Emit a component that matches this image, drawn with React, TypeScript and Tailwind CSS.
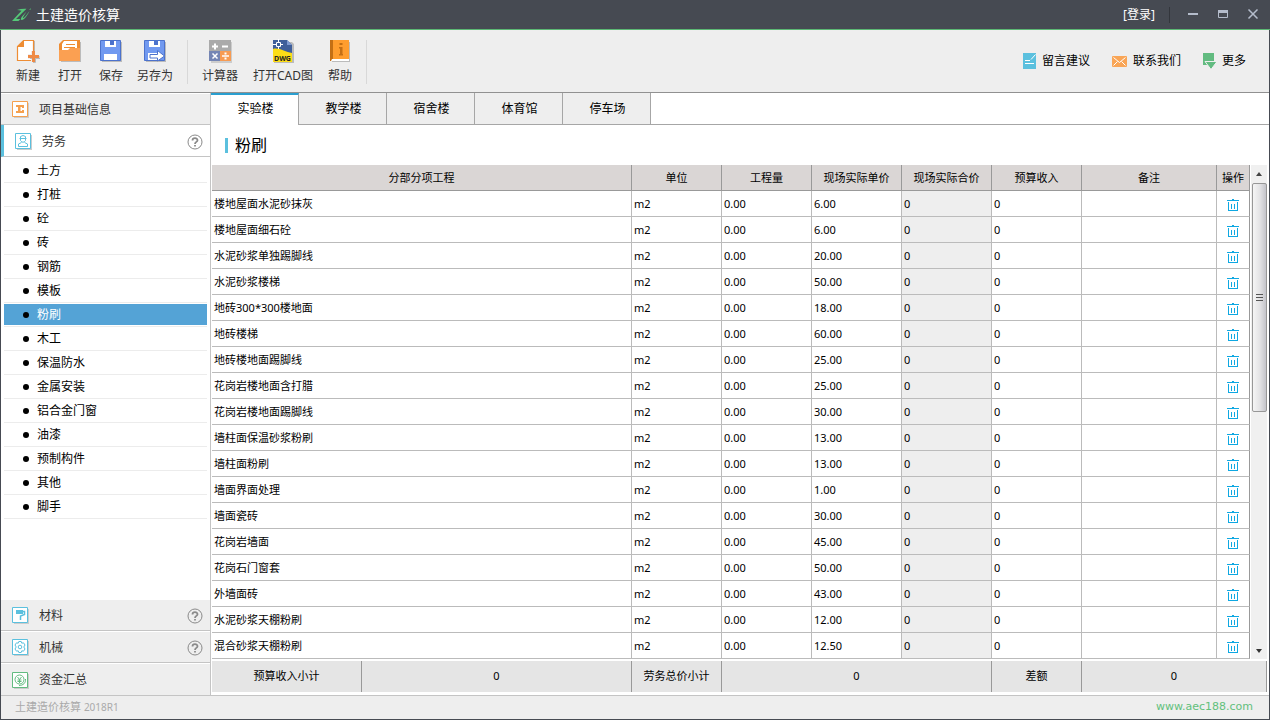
import type { ReactNode } from "react";

type Row = { name: string; price: string };

const rows: Row[] = [
  { name: "楼地屋面水泥砂抹灰", price: "6.00" },
  { name: "楼地屋面细石砼", price: "6.00" },
  { name: "水泥砂浆单独踢脚线", price: "20.00" },
  { name: "水泥砂浆楼梯", price: "50.00" },
  { name: "地砖300*300楼地面", price: "18.00" },
  { name: "地砖楼梯", price: "60.00" },
  { name: "地砖楼地面踢脚线", price: "25.00" },
  { name: "花岗岩楼地面含打腊", price: "25.00" },
  { name: "花岗岩楼地面踢脚线", price: "30.00" },
  { name: "墙柱面保温砂浆粉刷", price: "13.00" },
  { name: "墙柱面粉刷", price: "13.00" },
  { name: "墙面界面处理", price: "1.00" },
  { name: "墙面瓷砖", price: "30.00" },
  { name: "花岗岩墙面", price: "45.00" },
  { name: "花岗石门窗套", price: "50.00" },
  { name: "外墙面砖", price: "43.00" },
  { name: "水泥砂浆天棚粉刷", price: "12.00" },
  { name: "混合砂浆天棚粉刷", price: "12.50" },
];

const trades = [
  "土方", "打桩", "砼", "砖", "钢筋", "模板", "粉刷", "木工",
  "保温防水", "金属安装", "铝合金门窗", "油漆", "预制构件", "其他", "脚手",
];

const buildings = ["实验楼", "教学楼", "宿舍楼", "体育馆", "停车场"];

const headers = ["分部分项工程", "单位", "工程量", "现场实际单价", "现场实际合价", "预算收入", "备注", "操作"];

function Logo() {
  return (
    <svg width="19" height="14" viewBox="0 0 19 14" aria-hidden="true">
      <path d="M5 2C8 1 11 .6 14.500 .8L4 11H8.500L6.500 13H0L9.500 2.800C8 2.400 6.500 2.200 5 2Z" fill="#55c878" />
      <path d="M14.500 3.500 10 8.500C7.500 12 9.500 13.200 12 11 14.500 8.800 16.500 5.500 17.500 3 15.500 5.500 13.500 8.500 11.500 10 10.500 10.500 11 9 14.500 3.500Z" fill="#55c878" />
      <path d="M17 1.800 18.800 .3V1.500Z" fill="#55c878" />
    </svg>
  );
}

function NewIcon() {
  return (
    <svg width="24" height="24" viewBox="0 0 24 24" aria-hidden="true">
      <path d="M8 2h11v20H3V8z" fill="#bbb" />
      <path d="M7.500 1.500H17.500V21.500H1.500V7.500Z" fill="#fff" stroke="#ee8d34" strokeWidth="1.200" />
      <path d="M1 8 8 1V8Z" fill="#ee8d34" />
      <path d="M12 17.500H24M17.500 12V23" stroke="#eee" strokeWidth="5" />
      <path d="M14 19.500H24V17M19.500 20V23.500H17" fill="none" stroke="#bbb" />
      <path d="M12 17.500H23M17.500 12V23" stroke="#ef8a45" strokeWidth="3" />
    </svg>
  );
}

function OpenIcon() {
  return (
    <svg width="24" height="24" viewBox="0 0 24 24" aria-hidden="true">
      <path d="M3 3h20v20H3z" fill="#bbb" />
      <path d="M5 1H22V22H1V5Z" fill="#ee8c32" />
      <path d="M6 2H19V11H12L10 14H4V5Z" fill="#fff" />
      <path d="M8 5.500H17M6 8.500H17" stroke="#ee8c32" />
      <path d="M1 11H10L12 9H22V22H1Z" fill="#fba052" />
    </svg>
  );
}

function SaveIcon({ arrow }: { arrow?: boolean }) {
  return (
    <svg width="24" height="24" viewBox="0 0 24 24" aria-hidden="true">
      <path d="M3 3h20v20H3z" fill="#bbb" />
      <path d="M1.500 1.500H21.500V21.500H1.500Z" fill="#7199f0" stroke="#4c72cc" />
      <path d="M6 2H17V8H6Z" fill="#fff" />
      <path d="M11 2H15V6H11Z" fill="#4c72cc" />
      {arrow ? (
        <>
          <path d="M5 14H14V21H5Z" fill="#fff" />
          <path d="M7 15.500H14.500V11.500L21.500 17 14.500 22V19H7Z" fill="#fff" stroke="#4c72cc" />
        </>
      ) : (
        <path d="M5 15H18V21H5Z" fill="#fff" />
      )}
    </svg>
  );
}

function CalculatorIcon() {
  return (
    <svg width="24" height="24" viewBox="0 0 24 24" aria-hidden="true">
      <path d="M3 3H24V24H3Z" fill="#ccc" />
      <path d="M1 1H23V12H1Z" fill="#aaa" />
      <path d="M1 12H12V22H1Z" fill="#7485b4" />
      <path d="M12 12H23V22H12Z" fill="#f79b52" />
      <path d="M4 7.500H10M7 4.500V10.500M14 7.500H20" stroke="#fff" strokeWidth="2" />
      <path d="M4.500 14.500 9.500 19.500M9.500 14.500 4.500 19.500M14 17H21" stroke="#fff" strokeWidth="1.500" />
      <path d="M16.500 13.500H18.500V15.500H16.500ZM16.500 18.500H18.500V20.500H16.500Z" fill="#fff" />
    </svg>
  );
}

function DwgIcon() {
  return (
    <svg width="24" height="24" viewBox="0 0 24 24" aria-hidden="true">
      <path d="M3 3H21L23 5V24H3Z" fill="#bbb" />
      <path d="M2 1H16L21 6V22H2Z" fill="#3f5f9a" />
      <path d="M16 1 21 6H16Z" fill="#7e9ad0" />
      <path d="M2 10C8 8 14 13 21 14V23H2Z" fill="#fddd16" />
      <path d="M2 5.500H12M7.500 0V10" stroke="#fff" />
      <path d="M5.500 3.500H9.500V7.500H5.500Z" fill="#3f5f9a" stroke="#fff" />
      <text x="11.500" y="22" textAnchor="middle" fontSize="7" fontWeight="bold" fontFamily="Noto Sans, sans-serif" fill="#222">
        DWG
      </text>
    </svg>
  );
}

function HelpBookIcon() {
  return (
    <svg width="24" height="24" viewBox="0 0 24 24" aria-hidden="true">
      <path d="M4 3H22V23H4Z" fill="#bbb" />
      <path d="M2 1H21V20H2Z" fill="#ff9d2e" />
      <path d="M2 1H5V22H2Z" fill="#c46f14" />
      <path d="M4 20H21V22H3Z" fill="#fff" />
      <path d="M11.500 4H14.500V6H11.500ZM11 8H14.500V15H15V16.500H11V15H12V9.500H11Z" fill="#c46f14" />
    </svg>
  );
}

function NoteIcon() {
  return (
    <svg width="13" height="16" viewBox="0 0 13 16" aria-hidden="true">
      <path d="M0 0H13V16H0Z" fill="#5bc0de" />
      <path d="M2 7.500H7M2 10.500H11M8 6.500 12.500 1.500" stroke="#fff" />
    </svg>
  );
}

function MailIcon() {
  return (
    <svg width="15" height="11" viewBox="0 0 15 11" aria-hidden="true">
      <rect width="15" height="11" rx="1" fill="#f9a556" />
      <path d="M1.500 1.500 7.500 6.500 13.500 1.500M1.500 9.500 5.500 5.500M13.500 9.500 9.500 5.500" fill="none" stroke="#fff" />
    </svg>
  );
}

function MoreIcon() {
  return (
    <svg width="13" height="16" viewBox="0 0 13 16" aria-hidden="true">
      <path d="M0 0H11V12H0Z" fill="#62bb80" />
      <path d="M2 8.500H14L8 16.500Z" fill="#62bb80" stroke="#eee" />
    </svg>
  );
}

function TrashIcon() {
  return (
    <svg width="12" height="12" viewBox="0 0 12 12" shapeRendering="crispEdges" aria-hidden="true">
      <path d="M5 0H7V1H12V2H0V1H5Z" fill="#0fa8e2" />
      <path d="M1.500 3V11.500H10.500V3M4.500 5V10M7.500 5V10" fill="none" stroke="#0fa8e2" />
    </svg>
  );
}

function IconFrame({ color, children }: { color: string; children: ReactNode }) {
  return (
    <svg width="17" height="17" viewBox="0 0 17 17" fill="none" stroke={color} aria-hidden="true">
      <path d="M2 2H17V17H2Z" fill="#ccc" stroke="none" />
      <path d="M.5 .5H15.500V15.500H.5Z" fill="#fff" />
      {children}
    </svg>
  );
}

function HelpMark() {
  return (
    <svg className="ml-auto" width="16" height="16" viewBox="0 0 16 16" fill="none" stroke="#8a8a8a" aria-hidden="true">
      <circle cx="8" cy="8" r="7" />
      <path d="M5.500 6.500C5.500 3.500 10.500 3.500 10.500 6.200 10.500 8 8 7.800 8 10M8 11V12.500" strokeWidth="1.800" />
    </svg>
  );
}

function ToolButton({ label, width, children }: { label: string; width: string; children: ReactNode }) {
  return (
    <button type="button" className={`flex flex-col items-center gap-[5px] text-xs leading-4 text-[#333] ${width}`}>
      {children}
      {label}
    </button>
  );
}

function SectionButton({ label, help, icon, border = true }: { label: string; help?: boolean; icon: ReactNode; border?: boolean }) {
  return (
    <button
      type="button"
      className={`flex h-8 w-full shrink-0 items-center gap-2.5 border-t border-t-white bg-[#eee] pt-px pr-[7px] pl-[11px] text-left text-xs text-[#333] ${border ? "border-b border-b-[#c4c4c4]" : ""}`}
    >
      {icon}
      {label}
      {help && <HelpMark />}
    </button>
  );
}

function TitleBar() {
  return (
    <header className="flex h-[30px] items-center border-b border-[#5cb874] bg-[#464a52] pr-[11px] pl-3 text-white">
      <Logo />
      <h1 className="ml-[5px] text-sm leading-5">土建造价核算</h1>
      <button type="button" className="ml-auto text-xs">[登录]</button>
      <div className="ml-[14px] h-4 w-px bg-[#33363c]" />
      <button type="button" aria-label="最小化" className="ml-[17px]">
        <svg width="12" height="12" viewBox="0 0 12 12"><path d="M1 5H11" stroke="#b4bccb" strokeWidth="2" /></svg>
      </button>
      <button type="button" aria-label="最大化" className="ml-[18px]">
        <svg width="12" height="12" viewBox="0 0 12 12"><path d="M1.500 1V8.500H10.500V1" fill="none" stroke="#b4bccb" /><path d="M1 2.500H11" stroke="#b4bccb" strokeWidth="3" /></svg>
      </button>
      <button type="button" aria-label="关闭" className="ml-[18px]">
        <svg width="12" height="12" viewBox="0 0 12 12"><path d="M1.500 .5 10.500 9.500M10.500 .5 1.500 9.500" stroke="#b4bccb" strokeWidth="1.500" /></svg>
      </button>
    </header>
  );
}

function Toolbar() {
  return (
    <div className="flex h-[63px] items-center justify-between border-b border-[#919191] bg-[#eee] pr-[23px] pl-[7px]">
      <div className="flex items-center gap-px pt-px">
        <ToolButton label="新建" width="w-10"><NewIcon /></ToolButton>
        <ToolButton label="打开" width="w-[42px]"><OpenIcon /></ToolButton>
        <ToolButton label="保存" width="w-[38px]"><SaveIcon /></ToolButton>
        <ToolButton label="另存为" width="w-12"><SaveIcon arrow /></ToolButton>
        <div className="mx-[7px] h-11 w-px bg-[#d8d8d8]" />
        <ToolButton label="计算器" width="w-12"><CalculatorIcon /></ToolButton>
        <ToolButton label="打开CAD图" width="w-[76px]"><DwgIcon /></ToolButton>
        <ToolButton label="帮助" width="w-9"><HelpBookIcon /></ToolButton>
        <div className="mx-[7px] h-11 w-px bg-[#d8d8d8]" />
      </div>
      <div className="flex items-center gap-[22px] text-xs text-black">
        <button type="button" className="flex items-center gap-1.5"><NoteIcon />留言建议</button>
        <button type="button" className="flex items-center gap-1.5"><MailIcon />联系我们</button>
        <button type="button" className="flex items-center gap-1.5"><MoreIcon />更多</button>
      </div>
    </div>
  );
}

function Sidebar() {
  return (
    <nav className="flex w-[210px] shrink-0 flex-col border-r border-[#c4c4c4] bg-white">
      <SectionButton
        label="项目基础信息"
        icon={
          <IconFrame color="#f5a04e">
            <path d="M4 4H12V7H10V6H8.500V10H10V9H12V12H4V10H6V6H4Z" fill="#f5a04e" stroke="none" />
          </IconFrame>
        }
      />
      <button
        type="button"
        className="flex h-8 w-full shrink-0 items-center gap-2.5 border-b border-l-[3px] border-b-[#c4c4c4] border-l-[#5bc0de] pt-0.5 pr-[7px] pl-[11px] text-left text-xs text-[#333]"
      >
        <IconFrame color="#5bc0de">
          <path d="M5.500 5V3.500Q8 1.500 10.500 3.500V5M4.500 5.500H11.500M5.500 6V7.500Q8 11 10.500 7.500V6M6.500 9.500 3.500 11V13.500H12.500V11L9.500 9.500" />
        </IconFrame>
        劳务
        <HelpMark />
      </button>
      <ul className="flex-1 pt-0.5 pr-[3px] pl-[3px]">
        {trades.map((trade) => (
          <li key={trade} className="border-b border-[#ececec] py-px">
            <button
              type="button"
              className={`flex h-[21px] w-full items-center gap-2 pl-[19px] text-left text-xs ${trade === "粉刷" ? "bg-[#54a3d6] text-white" : "text-black"}`}
            >
              <span className="size-1.5 rounded-full bg-black" />
              {trade}
            </button>
          </li>
        ))}
      </ul>
      <SectionButton
        label="材料"
        help
        icon={
          <IconFrame color="#5bc0de">
            <path d="M4 3H11V7H4Z" fill="#5bc0de" stroke="none" />
            <path d="M11 4.500H12.500V7.500L8.500 9V13" strokeWidth="1.500" />
          </IconFrame>
        }
      />
      <SectionButton
        label="机械"
        help
        icon={
          <IconFrame color="#5bc0de">
            <circle cx="8" cy="8" r="1.800" />
            <path d="M6.800 2.500H9.200L9.800 4.200 11.500 3.800 13 6 11.800 8 13 10 11.500 12.200 9.800 11.800 9.200 13.500H6.800L6.200 11.800 4.500 12.200 3 10 4.200 8 3 6 4.500 3.800 6.200 4.200Z" />
          </IconFrame>
        }
      />
      <SectionButton
        label="资金汇总"
        border={false}
        icon={
          <IconFrame color="#62bb80">
            <circle cx="7.500" cy="7.500" r="4.500" />
            <path d="M5.500 5 7.500 7.500 9.500 5M7.500 7.500V11M5.500 8H9.500M5.500 9.500H9.500M13.500 7C14 11 11 13.500 7 13.500" />
          </IconFrame>
        }
      />
    </nav>
  );
}

function CostTable() {
  return (
    <table className="w-full table-fixed border-separate border-spacing-0 text-[11px] leading-4 text-black">
      <colgroup>
        <col />
        <col className="w-[90px]" />
        <col className="w-[90px]" />
        <col className="w-[90px]" />
        <col className="w-[90px]" />
        <col className="w-[90px]" />
        <col className="w-[135px]" />
        <col className="w-[33px]" />
      </colgroup>
      <thead>
        <tr className="h-[26px] bg-[#dad6d5]">
          {headers.map((header) => (
            <th key={header} scope="col" className="border-r border-b border-[#999] p-0 font-normal">{header}</th>
          ))}
        </tr>
      </thead>
      <tbody>
        {rows.map((row) => (
          <tr key={row.name} className="h-[26px] *:border-r *:border-b *:border-[#bbb] *:px-0.5 *:py-0">
            <td>{row.name}</td>
            <td>m2</td>
            <td>0.00</td>
            <td>{row.price}</td>
            <td className="bg-[#eee]">0</td>
            <td>0</td>
            <td />
            <td className="border-r-[#999]!">
              <button type="button" aria-label={`删除${row.name}`} className="flex w-full justify-center pt-0.5">
                <TrashIcon />
              </button>
            </td>
          </tr>
        ))}
      </tbody>
    </table>
  );
}

function Scrollbar() {
  return (
    <div className="ml-px flex w-4 shrink-0 flex-col items-center bg-[#f0f0f0]" aria-hidden="true">
      <svg width="16" height="18" viewBox="0 0 16 18"><path d="M5 11 8 7 11 11Z" fill="#444" /></svg>
      <div className="flex h-[229px] w-[15px] flex-col items-center justify-center gap-0.5 rounded-xs border border-[#979797] bg-linear-to-r from-[#f5f5f5] via-[#e4e4e6] to-[#c4c4ca]">
        <span className="h-px w-[7px] bg-[#555]" />
        <span className="h-px w-[7px] bg-[#555]" />
        <span className="h-px w-[7px] bg-[#555]" />
      </div>
      <svg className="mt-auto" width="16" height="16" viewBox="0 0 16 16"><path d="M5 6 8 10 11 6Z" fill="#333" /></svg>
    </div>
  );
}

function Totals() {
  return (
    <dl className="mt-0.5 flex h-[31px] bg-[#e5e5e5] text-[11px] text-black *:flex *:items-center *:justify-center *:border-r *:border-[#999]">
      <dt className="w-[150px]">预算收入小计</dt>
      <dd className="flex-1">0</dd>
      <dt className="w-[90px]">劳务总价小计</dt>
      <dd className="w-[270px]">0</dd>
      <dt className="w-[90px]">差额</dt>
      <dd className="w-[185px]">0</dd>
    </dl>
  );
}

export default function App() {
  return (
    <div className="flex min-h-screen flex-col bg-white font-['Noto_Sans','Noto_Sans_CJK_SC',sans-serif]">
      <TitleBar />
      <div className="flex flex-1 flex-col border-x border-b border-[#464a52]">
        <Toolbar />
        <div className="flex flex-1">
          <Sidebar />
          <main className="flex min-w-0 flex-1 flex-col">
            <div role="tablist" className="flex h-8 text-xs text-black">
              {buildings.map((building, i) => (
                <button
                  key={building}
                  type="button"
                  role="tab"
                  aria-selected={i === 0}
                  className={
                    i === 0
                      ? "w-[88px] border-t-2 border-r border-t-[#2a9fd0] border-r-[#a6a6a6] bg-white pb-0.5 pl-0.5"
                      : "w-[88px] border-r border-b border-[#a6a6a6] bg-[#eee] pl-0.5"
                  }
                >
                  {building}
                </button>
              ))}
              <div className="flex-1 border-b border-[#a6a6a6]" />
            </div>
            <div className="flex h-10 items-center gap-[7px] pl-[14px]">
              <span className="h-[15px] w-[3px] bg-[#5bc0de]" />
              <h2 className="text-base leading-5 text-black">粉刷</h2>
            </div>
            <div className="flex flex-1 flex-col pr-0.5 pl-px">
              <div className="flex">
                <CostTable />
                <Scrollbar />
              </div>
              <Totals />
            </div>
          </main>
        </div>
        <footer className="flex h-6 items-center justify-between border-t border-[#c4c4c4] bg-[#eee] pr-4 pl-[14px]">
          <span className="text-[11px] text-[#aaa]">
            土建造价核算 <span className="text-[10px]">2018R1</span>
          </span>
          <a href="http://www.aec188.com" className="font-['DejaVu_Sans',sans-serif] text-[11px] text-[#62c07c]">www.aec188.com</a>
        </footer>
      </div>
    </div>
  );
}
